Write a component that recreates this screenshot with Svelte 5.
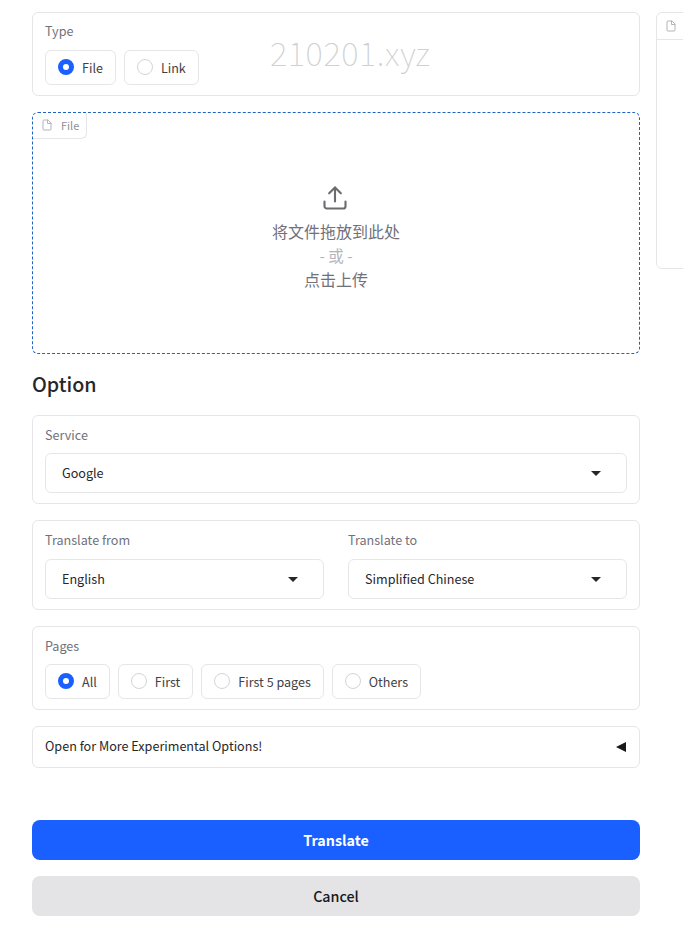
<script>
	const types = [
		{ label: "File", checked: true },
		{ label: "Link", checked: false },
	];
	const pages = [
		{ label: "All", checked: true },
		{ label: "First", checked: false },
		{ label: "First 5 pages", checked: false },
		{ label: "Others", checked: false },
	];
</script>

{#snippet fileIcon()}
	<svg class="file-icon" viewBox="0 0 24 24" fill="none" stroke="currentColor" stroke-width="2" stroke-linecap="round" stroke-linejoin="round">
		<path d="M13 2H6a2 2 0 0 0-2 2v16a2 2 0 0 0 2 2h12a2 2 0 0 0 2-2V9z" />
		<path d="M13 2v7h7" />
	</svg>
{/snippet}

{#snippet radios(items)}
	<div class="radios">
		{#each items as item}
			<label class="radio">
				<span class="dot" class:checked={item.checked}></span>
				<span>{item.label}</span>
			</label>
		{/each}
	</div>
{/snippet}

{#snippet select(value)}
	<div class="select">
		<span>{value}</span>
		<span class="caret"></span>
	</div>
{/snippet}

<div class="page">
	<main class="left">
		<section class="block type">
			<div class="label">Type</div>
			{@render radios(types)}
			<div class="watermark">210201.xyz</div>
		</section>

		<section class="drop">
			<div class="tag">
				{@render fileIcon()}
				<span>File</span>
			</div>
			<svg class="upload" viewBox="0 0 24 24" fill="none" stroke="currentColor" stroke-width="1.8" stroke-linecap="round" stroke-linejoin="round">
				<path d="M21 15v4a2 2 0 0 1-2 2H5a2 2 0 0 1-2-2v-4" />
				<path d="M17 8l-5-5-5 5" />
				<path d="M12 3v12" />
			</svg>
			<div class="drop-text">将文件拖放到此处</div>
			<div class="drop-or">- 或 -</div>
			<div class="drop-text">点击上传</div>
		</section>

		<h2>Option</h2>

		<section class="block">
			<div class="label">Service</div>
			{@render select("Google")}
		</section>

		<section class="block two">
			<div>
				<div class="label">Translate from</div>
				{@render select("English")}
			</div>
			<div>
				<div class="label">Translate to</div>
				{@render select("Simplified Chinese")}
			</div>
		</section>

		<section class="block">
			<div class="label">Pages</div>
			{@render radios(pages)}
		</section>

		<section class="accordion">
			<span class="accordion-text">Open for More Experimental Options!</span>
			<span class="arrow"></span>
		</section>

		<button class="btn primary">Translate</button>
		<button class="btn secondary">Cancel</button>
	</main>

	<aside class="preview">
		<div class="preview-head">
			{@render fileIcon()}
		</div>
	</aside>
</div>

<style>
	:global(body) {
		background: #fff;
		overflow: hidden;
	}

	.page {
		display: grid;
		grid-template-columns: 608px 200px;
		gap: 16px;
		align-items: start;
		padding: 12px 0 0 32px;
		width: 683px;
		height: 926px;
		box-sizing: border-box;
		overflow: hidden;
		font-family: "Noto Sans CJK SC", sans-serif;
		font-size: 14px;
		color: #27272a;
	}

	.left {
		display: flex;
		flex-direction: column;
		gap: 16px;
	}

	.block {
		position: relative;
		border: 1px solid #e6e6e9;
		border-radius: 6px;
		padding: 9px 12px 10px;
	}

	.two {
		display: grid;
		grid-template-columns: 1fr 1fr;
		gap: 24px;
	}

	.label {
		font-size: 12.6px;
		line-height: 20px;
		color: #71717a;
		margin-bottom: 8px;
	}

	.type .label {
		line-height: 18px;
		padding-bottom: 2px;
	}

	.two .label {
		margin-bottom: 9px;
	}

	.radios {
		display: flex;
		gap: 8px;
	}

	.radio {
		display: flex;
		align-items: center;
		gap: 8px;
		height: 35px;
		box-sizing: border-box;
		padding: 0 12px 1px;
		border: 1px solid #e6e6e9;
		border-radius: 6px;
		font-size: 12.55px;
		color: #3f3f46;
	}

	.dot {
		width: 16px;
		height: 16px;
		box-sizing: border-box;
		border: 1px solid #d4d4d8;
		border-radius: 50%;
	}

	.dot.checked {
		border: 5px solid #1a5fff;
	}

	.watermark {
		position: absolute;
		left: 237px;
		top: 17px;
		font-family: "Noto Sans CJK SC", sans-serif;
		font-weight: 100;
		font-size: 33px;
		line-height: 44px;
		letter-spacing: 0.6px;
		color: #d0d0d0;
	}

	.drop {
		position: relative;
		height: 242px;
		box-sizing: border-box;
		border: 1px dashed #1f62c4;
		border-radius: 6px;
		display: flex;
		flex-direction: column;
		align-items: center;
		padding-top: 71px;
		color: #71717a;
	}

	.tag {
		position: absolute;
		left: 0;
		top: 0;
		display: flex;
		align-items: center;
		gap: 8px;
		height: 26px;
		padding: 0 7px 1px 8px;
		box-sizing: border-box;
		border: 1px solid #e6e6e9;
		border-top: none;
		border-left: none;
		border-radius: 0 0 6px 0;
		font-size: 11px;
		color: #8f8f96;
	}

	.file-icon {
		width: 12px;
		height: 12px;
		color: #b4b4bb;
	}

	.upload {
		width: 28px;
		height: 28px;
		color: #6b6b70;
		margin: 0 2px 7px 0;
	}

	.drop-text {
		font-size: 16px;
		line-height: 24px;
		color: #71717a;
	}

	.drop-or {
		font-size: 15.5px;
		line-height: 24px;
		color: #b4b4bb;
	}

	h2 {
		margin: 0;
		font-size: 19.7px;
		line-height: 27px;
		height: 29px;
		font-weight: 500;
		color: #27272a;
	}

	.select {
		display: flex;
		align-items: center;
		justify-content: space-between;
		height: 40px;
		box-sizing: border-box;
		padding: 0 25px 1px 16px;
		border: 1px solid #e6e6e9;
		border-radius: 6px;
		font-size: 12.6px;
		color: #27272a;
	}

	.caret {
		width: 0;
		height: 0;
		margin-top: 1px;
		border-left: 5px solid transparent;
		border-right: 5px solid transparent;
		border-top: 5px solid #27272a;
	}

	.accordion {
		display: flex;
		align-items: center;
		justify-content: space-between;
		height: 42px;
		box-sizing: border-box;
		padding: 0 13px 0 12px;
		border: 1px solid #e6e6e9;
		border-radius: 6px;
		font-size: 12.6px;
		color: #27272a;
	}

	.accordion-text {
		padding-bottom: 3px;
	}

	.arrow {
		width: 0;
		height: 0;
		border-top: 5px solid transparent;
		border-bottom: 5px solid transparent;
		border-right: 10px solid #18181b;
	}

	.btn {
		height: 40px;
		border: none;
		border-radius: 8px;
		padding: 0 0 2px;
		font-family: inherit;
		font-size: 14.3px;
		font-weight: 500;
	}

	.primary {
		margin-top: 36px;
		background: #1a5fff;
		color: #fff;
		font-weight: 600;
	}

	.secondary {
		background: #e4e4e7;
		color: #18181b;
	}

	.preview {
		height: 257px;
		box-sizing: border-box;
		border: 1px solid #e6e6e9;
		border-radius: 6px;
	}

	.preview-head {
		display: flex;
		align-items: center;
		height: 26px;
		padding-left: 8px;
		border-bottom: 1px solid #e6e6e9;
	}
</style>
